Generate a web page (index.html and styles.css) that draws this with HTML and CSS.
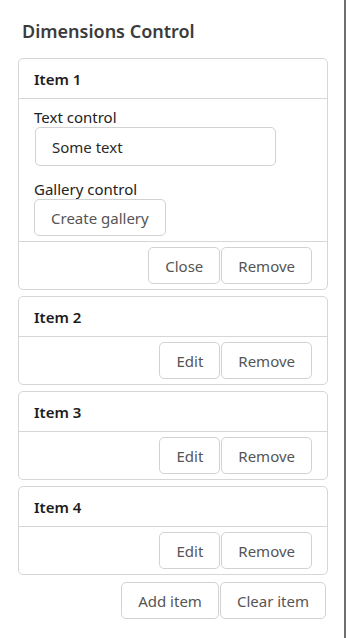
FILE: index.html
```html
<!DOCTYPE html>
<html>
<head>
<meta charset="utf-8">
<link rel="stylesheet" href="styles.css">
</head>
<body>
<div class="panel">
  <h1 class="title">Dimensions Control</h1>
  <div class="list">
    <div class="card">
      <div class="card-header">Item 1</div>
      <div class="card-body">
        <div class="label">Text control</div>
        <div class="input">Some text</div>
        <div class="label">Gallery control</div>
        <div class="body-actions"><button class="btn">Create gallery</button></div>
      </div>
      <div class="card-footer">
        <button class="btn">Close</button><button class="btn">Remove</button>
      </div>
    </div>
    <div class="card">
      <div class="card-header">Item 2</div>
      <div class="card-footer">
        <button class="btn">Edit</button><button class="btn">Remove</button>
      </div>
    </div>
    <div class="card">
      <div class="card-header">Item 3</div>
      <div class="card-footer">
        <button class="btn">Edit</button><button class="btn">Remove</button>
      </div>
    </div>
    <div class="card">
      <div class="card-header">Item 4</div>
      <div class="card-footer">
        <button class="btn">Edit</button><button class="btn">Remove</button>
      </div>
    </div>
  </div>
  <div class="page-actions">
    <button class="btn">Add item</button><button class="btn">Clear item</button>
  </div>
</div>
</body>
</html>
```
FILE: styles.css
```css
html, body {
  margin: 0;
  padding: 0;
  background: #fff;
}
body {
  font-family: "Noto Sans", "Open Sans", sans-serif;
  font-size: 15px;
  color: #222;
}
.panel {
  width: 346px;
  height: 638px;
  box-sizing: border-box;
  border-right: 2px solid #6e6e6e;
  padding: 19px 0 0 18px;
}
.title {
  margin: 0 0 15px 4px;
  font-size: 18px;
  font-weight: 600;
  line-height: 24px;
  color: #3b3b3b;
}
.list {
  display: flex;
  flex-direction: column;
  gap: 6px;
  width: 310px;
}
.card {
  border: 1px solid #d6d6d6;
  border-radius: 5px;
}
.card-header {
  height: 40px;
  box-sizing: border-box;
  padding: 0 15px;
  display: flex;
  align-items: center;
  font-weight: 600;
  color: #1c1c1c;
  border-bottom: 1px solid #d6d6d6;
}
.card-body {
  padding: 8px 15px 5px 15px;
  border-bottom: 1px solid #d6d6d6;
}
.label {
  line-height: 20px;
  color: #222;
}
.input {
  margin: 0 0 13px 1px;
  width: 241px;
  height: 39px;
  box-sizing: border-box;
  border: 1px solid #d2d2d2;
  border-radius: 5px;
  padding: 0 16px;
  display: flex;
  align-items: center;
  color: #2a2a2a;
}
.body-actions {
  display: flex;
}
.card-footer {
  height: 47px;
  box-sizing: border-box;
  padding: 0 15px;
  display: flex;
  justify-content: flex-end;
  align-items: center;
  gap: 1px;
}
.btn {
  font-family: inherit;
  font-size: 15px;
  color: #555;
  background: #fff;
  border: 1px solid #d2d2d2;
  border-radius: 5px;
  height: 37px;
  padding: 0 16px;
  margin: 0;
  line-height: 20px;
}
.page-actions {
  width: 308px;
  margin-top: 7px;
  display: flex;
  justify-content: flex-end;
  gap: 1px;
}
```
